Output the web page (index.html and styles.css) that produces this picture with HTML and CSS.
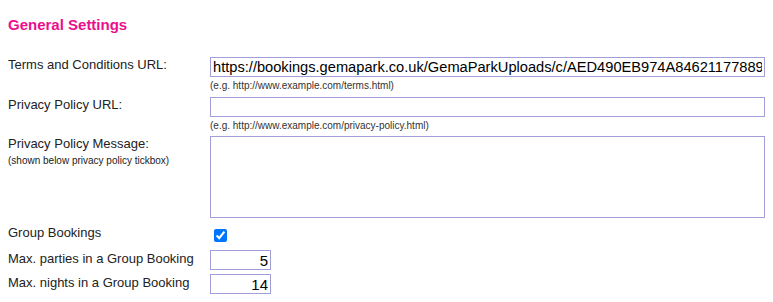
FILE: index.html
```html
<!DOCTYPE html>
<html lang="en">
<head>
    <meta charset="UTF-8">
    <meta name="viewport" content="width=device-width, initial-scale=1.0">
    <title>General Settings</title>
    <link rel="stylesheet" href="styles.css">
</head>
<body>
    <h2 class="section-title">General Settings</h2>

    <div class="settings">
        <div class="row row-terms">
            <label class="label" for="termsUrl">Terms and Conditions URL:</label>
            <div class="field">
                <input type="text" class="text-wide" id="termsUrl" value="https://bookings.gemapark.co.uk/GemaParkUploads/c/AED490EB974A84621177889">
                <div class="hint">(e.g. http://www.example.com/terms.html)</div>
            </div>
        </div>

        <div class="row row-privacy">
            <label class="label" for="privacyUrl">Privacy Policy URL:</label>
            <div class="field">
                <input type="text" class="text-wide" id="privacyUrl" value="">
                <div class="hint">(e.g. http://www.example.com/privacy-policy.html)</div>
            </div>
        </div>

        <div class="row row-message">
            <label class="label" for="privacyMsg">Privacy Policy Message:
                <span class="sub">(shown below privacy policy tickbox)</span>
            </label>
            <div class="field">
                <textarea class="text-area" id="privacyMsg"></textarea>
            </div>
        </div>

        <div class="row row-group">
            <label class="label" for="groupBookings">Group Bookings</label>
            <div class="field">
                <input type="checkbox" class="check" id="groupBookings" checked>
            </div>
        </div>

        <div class="row row-num">
            <label class="label" for="maxParties">Max. parties in a Group Booking</label>
            <div class="field">
                <input type="text" class="text-num" id="maxParties" value="5">
            </div>
        </div>

        <div class="row row-num">
            <label class="label" for="maxNights">Max. nights in a Group Booking</label>
            <div class="field">
                <input type="text" class="text-num" id="maxNights" value="14">
            </div>
        </div>
    </div>
</body>
</html>
```

FILE: styles.css
```css
html, body {
    overflow: hidden;
}

body {
    margin: 8px 8px 0 8px;
    font-family: "Liberation Sans", Arial, sans-serif;
    color: #222;
    background-color: #fff;
}

/* Section heading */
.section-title {
    margin: 8px 0 0 0;
    font-size: 15px;
    line-height: 18px;
    font-weight: bold;
    color: #ec0e8c;
}

/* Settings rows */
.settings {
    margin-top: 23px;
}

.row {
    display: flex;
    align-items: flex-start;
}

.label {
    width: 202px;
    flex: none;
    font-size: 13px;
    line-height: 15px;
}

.field {
    flex: 1;
    min-width: 0;
}

.sub {
    display: block;
    margin-top: 4px;
    font-size: 10px;
    line-height: 12px;
}

.hint {
    margin-top: 3px;
    font-size: 10px;
    line-height: 12px;
    color: #333;
}

.row-privacy {
    margin-top: 5px;
}

.row-message {
    margin-top: 4px;
}

.row-group {
    margin-top: 7px;
}

.row-num {
    margin-top: 4px;
}

.row-num .label {
    padding-top: 1px;
}

/* Inputs */
.text-wide,
.text-num,
.text-area {
    box-sizing: border-box;
    margin: 0;
    border: 1px solid #a29ed8;
    border-radius: 0;
    font-family: "Liberation Sans", Arial, sans-serif;
    font-size: 15px;
    color: #000;
    background-color: #fff;
    outline: none;
}

.text-wide {
    display: block;
    width: 100%;
    height: 20px;
    padding: 0 2px;
    font-size: 14.65px;
}

.text-area {
    display: block;
    width: 100%;
    height: 82px;
    padding: 2px;
    resize: none;
}

.text-num {
    width: 61px;
    height: 20px;
    padding: 0 2px;
    text-align: right;
}

.check {
    margin: 4px 0 0 4px;
    width: 13px;
    height: 13px;
    accent-color: #0075ff;
}
```
